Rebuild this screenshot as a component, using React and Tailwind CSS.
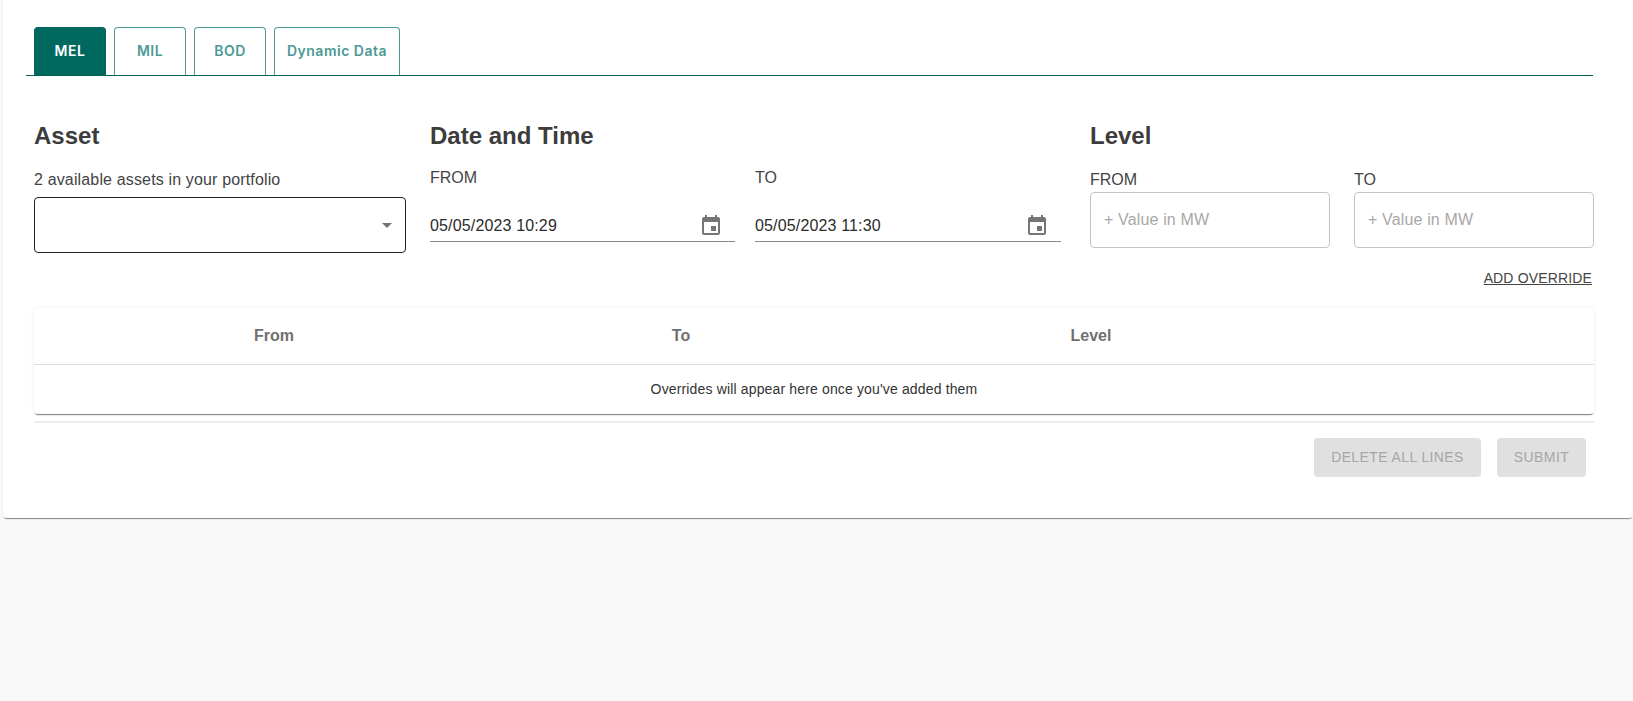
const sans = "font-['Liberation_Sans',Arial,sans-serif]";

function CalendarIcon() {
  return (
    <svg width="24" height="24" viewBox="0 0 24 24" fill="#757575" className="shrink-0">
      <path d="M17 12h-5v5h5v-5zM16 1v2H8V1H6v2H5c-1.11 0-1.99.9-1.99 2L3 19c0 1.1.89 2 2 2h14c1.1 0 2-.9 2-2V5c0-1.1-.9-2-2-2h-1V1h-2zm3 18H5V8h14v11z" />
    </svg>
  );
}

function DateField({ label, value, width }) {
  return (
    <div className={`flex flex-col ${width}`}>
      <div className="h-[18px] text-[16px] leading-[18px] text-[#444444]">{label}</div>
      <div className="mt-[16px] flex h-[39px] items-center justify-between border-b border-[#8c8c8c] pt-[7px] pr-[12px]">
        <span className="text-[16px] tracking-[0.15px] text-[#2b2b2b]">{value}</span>
        <CalendarIcon />
      </div>
    </div>
  );
}

function LevelField({ label }) {
  return (
    <div className="flex w-[240px] flex-col">
      <div className="h-[18px] text-[16px] leading-[18px] text-[#444444]">{label}</div>
      <div className="mt-[3px] flex h-[56px] items-center rounded border border-[#c4c4c4] pb-[1px] pl-[13px] text-[16px] tracking-[0.15px] text-[#a8a8a8]">
        + Value in MW
      </div>
    </div>
  );
}

function Tab({ children, active, width }) {
  return (
    <div
      className={`flex h-[48px] items-center justify-center rounded-t border border-b-0 pb-[2px] font-['Inter',sans-serif] text-[14px] font-semibold tracking-[0.5px] ${width} ${
        active ? "border-[#00695f] bg-[#00695f] text-white" : "border-[#4c9a94] bg-white text-[#4c9a94]"
      }`}
    >
      {children}
    </div>
  );
}

export default function App() {
  return (
    <div className={`h-[701px] bg-[#f9f9f9] pl-[3px] ${sans}`}>
      <div className="h-[518px] rounded-b bg-white pt-[27px] pl-[23px] shadow-[0_2px_1px_-1px_rgba(0,0,0,0.45),0_0_3px_rgba(0,0,0,0.08)]">
        <div className="flex w-[1567px] gap-2 border-b border-[#005f56] pl-2">
          <Tab active width="w-[72px]">MEL</Tab>
          <Tab width="w-[72px]">MIL</Tab>
          <Tab width="w-[72px]">BOD</Tab>
          <Tab width="w-[126px]">Dynamic Data</Tab>
        </div>

        <div className="ml-2 w-[1560px]">
          <div className="mt-[46px] flex">
            <div className="w-[372px]">
              <h2 className="h-[28px] text-[24px] leading-[28px] font-bold text-[#3c3c3c]">Asset</h2>
              <div className="mt-[21px] h-[18px] text-[16px] leading-[18px] tracking-[0.15px] text-[#444444]">2 available assets in your portfolio</div>
              <div className="mt-[8px] flex h-[56px] items-center justify-end rounded border border-[#222222] pr-[13px]">
                <div className="h-0 w-0 border-x-[5px] border-t-[5px] border-x-transparent border-t-[#757575]" />
              </div>
            </div>
            <div className="ml-[24px] w-[631px]">
              <h2 className="h-[28px] text-[24px] leading-[28px] font-bold text-[#3c3c3c]">Date and Time</h2>
              <div className="mt-[19px] flex gap-5">
                <DateField label="FROM" value="05/05/2023 10:29" width="w-[305px]" />
                <DateField label="TO" value="05/05/2023 11:30" width="w-[306px]" />
              </div>
            </div>
            <div className="ml-[29px] w-[504px]">
              <h2 className="h-[28px] text-[24px] leading-[28px] font-bold text-[#3c3c3c]">Level</h2>
              <div className="mt-[21px] flex gap-6">
                <LevelField label="FROM" />
                <LevelField label="TO" />
              </div>
              <div className="mt-[22px] pr-[2px] text-right text-[14px] leading-[16px] tracking-[0.15px] text-[#444444] underline">ADD OVERRIDE</div>
            </div>
          </div>

          <div className="mt-[22px] rounded bg-white shadow-[0_2px_1px_-1px_rgba(0,0,0,0.5),0_0_4px_rgba(0,0,0,0.08)]">
            <div className="grid h-[57px] grid-cols-[480px_334px_486px_260px] items-center border-b border-[#dddddd] text-center text-[16px] font-bold text-[#707070]">
              <div>From</div>
              <div>To</div>
              <div>Level</div>
              <div />
            </div>
            <div className="flex h-[49px] items-center justify-center text-[14px] tracking-[0.15px] text-[#333333]">
              Overrides will appear here once you've added them
            </div>
          </div>
          <div className="mt-[7px] h-[2px] bg-[#eeeeee]" />
          <div className="mt-[15px] flex justify-end gap-4 pr-2">
            <div className="flex h-[39px] w-[167px] items-center justify-center rounded bg-[#e0e0e0] text-[14px] tracking-[0.4px] text-[#a6a6a6]">DELETE ALL LINES</div>
            <div className="flex h-[39px] w-[89px] items-center justify-center rounded bg-[#e0e0e0] text-[14px] tracking-[0.4px] text-[#a6a6a6]">SUBMIT</div>
          </div>
        </div>
      </div>
    </div>
  );
}
